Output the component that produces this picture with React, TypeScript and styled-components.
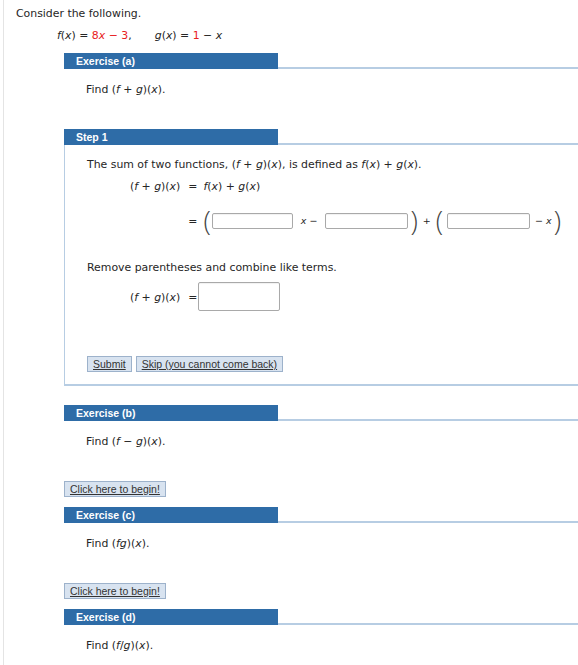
import React from "react";
import styled, { createGlobalStyle } from "styled-components";

const GlobalStyle = createGlobalStyle`
  html, body { margin: 0; padding: 0; background: #ffffff; }
  body {
    font-family: "DejaVu Sans", Verdana, sans-serif;
    font-size: 10.9px;
    color: #262626;
  }
`;

const Page = styled.div`
  margin-left: 3px;
  border-left: 1px solid #e4e4e4;
  min-height: 665px;
  padding: 6px 0 0 12px;
  box-sizing: border-box;
`;

const TextLine = styled.div<{ $indent?: number; $mt?: number }>`
  height: 14px;
  line-height: 16px;
  white-space: nowrap;
  padding-left: ${(p) => p.$indent ?? 0}px;
  margin-top: ${(p) => p.$mt ?? 0}px;
`;

const Var = styled.i`
  font-style: italic;
`;

const Red = styled.span`
  color: #e8201c;
`;

const Spacer = styled.span<{ $w: number }>`
  display: inline-block;
  width: ${(p) => p.$w}px;
`;

const Section = styled.div`
  margin-left: 48px;
`;

const Header = styled.div<{ $mt: number }>`
  display: flex;
  align-items: flex-end;
  margin-top: ${(p) => p.$mt}px;
`;

const HeaderLabel = styled.div`
  width: 214px;
  height: 16px;
  box-sizing: border-box;
  padding-left: 12px;
  background: #2e6ca7;
  color: #ffffff;
  font: bold 10.5px/16px "Liberation Sans", Arial, sans-serif;
  white-space: nowrap;
`;

const HeaderRule = styled.div`
  flex: 1;
  height: 2px;
  background: #b7cde3;
`;

const StepBox = styled.div`
  border-left: 1px solid #b7cde3;
  border-bottom: 2px solid #b7cde3;
  padding: 12px 0 12px 22px;
`;

const EqGrid = styled.div<{ $mt: number }>`
  display: grid;
  grid-template-columns: auto auto auto;
  justify-content: start;
  align-items: center;
  row-gap: 16px;
  margin-left: 43px;
  margin-top: ${(p) => p.$mt}px;
`;

const Cell = styled.div`
  height: 14px;
  line-height: 16px;
  white-space: nowrap;
`;

const Equals = styled.div<{ $after: number }>`
  height: 14px;
  line-height: 16px;
  padding: 0 ${(p) => p.$after}px 0 8px;
`;

const AnswerRow = styled.div`
  display: flex;
  align-items: center;
  height: 24px;
`;

const Paren = styled.span<{ $ml?: number; $mr?: number }>`
  font-family: "Open Sans", "DejaVu Sans", sans-serif;
  font-weight: 300;
  font-size: 27px;
  line-height: 24px;
  color: #444444;
  margin: 0 ${(p) => p.$mr ?? 0}px 0 ${(p) => p.$ml ?? 0}px;
`;

const Op = styled.span<{ $l: number; $r: number }>`
  font-size: 9.5px;
  line-height: 14px;
  white-space: nowrap;
  margin: 0 ${(p) => p.$r}px 0 ${(p) => p.$l}px;
`;

const Field = styled.span<{ $w: number; $h: number }>`
  display: inline-block;
  width: ${(p) => p.$w}px;
  height: ${(p) => p.$h}px;
  box-sizing: border-box;
  border: 1px solid #a9a9a9;
  border-radius: 2px;
  background: #ffffff;
  box-shadow: inset 0 1px 1px rgba(0, 0, 0, 0.06);
`;

const ButtonRow = styled.div`
  display: flex;
  gap: 4px;
  margin-top: 45px;
`;

const Btn = styled.button<{ $mt?: number }>`
  display: block;
  height: 16px;
  margin: ${(p) => p.$mt ?? 0}px 0 0 0;
  padding: 0 5px;
  border: 1px solid #9db2cb;
  background: #d8e3f0;
  color: #333333;
  font: 10.5px/14px "Liberation Sans", Arial, sans-serif;
  text-decoration: underline;
  white-space: nowrap;
  box-sizing: border-box;
  cursor: pointer;
`;

const FG = () => (
  <>
    (<Var>f</Var> + <Var>g</Var>)(<Var>x</Var>)
  </>
);

export default function App() {
  return (
    <>
      <GlobalStyle />
      <Page>
        <TextLine>Consider the following.</TextLine>
        <TextLine $indent={41} $mt={8}>
          <Var>f</Var>(<Var>x</Var>) = <Red>8<Var>x</Var> − 3</Red>,
          <Spacer $w={23} />
          <Var>g</Var>(<Var>x</Var>) = <Red>1</Red> − <Var>x</Var>
        </TextLine>

        <Section>
          <Header $mt={11}>
            <HeaderLabel>Exercise (a)</HeaderLabel>
            <HeaderRule />
          </Header>
          <TextLine $indent={22} $mt={13}>
            Find <FG />.
          </TextLine>

          <Header $mt={33}>
            <HeaderLabel>Step 1</HeaderLabel>
            <HeaderRule />
          </Header>
          <StepBox>
            <TextLine>
              The sum of two functions, <FG />, is defined as <Var>f</Var>(<Var>x</Var>) + <Var>g</Var>(<Var>x</Var>).
            </TextLine>
            <EqGrid $mt={8}>
              <Cell>
                <FG />
              </Cell>
              <Equals $after={6}>=</Equals>
              <Cell>
                <Var>f</Var>(<Var>x</Var>) + <Var>g</Var>(<Var>x</Var>)
              </Cell>
              <Cell />
              <Equals $after={3}>=</Equals>
              <AnswerRow>
                <Paren $mr={1}>(</Paren>
                <Field $w={81} $h={16} />
                <Op $l={8} $r={8}>
                  <Var>x</Var> −
                </Op>
                <Field $w={83} $h={16} />
                <Paren $ml={2}>)</Paren>
                <Op $l={5} $r={5}>+</Op>
                <Paren $mr={4}>(</Paren>
                <Field $w={83} $h={16} />
                <Op $l={5} $r={2}>
                  − <Var>x</Var>
                </Op>
                <Paren>)</Paren>
              </AnswerRow>
            </EqGrid>

            <TextLine $mt={27}>Remove parentheses and combine like terms.</TextLine>
            <EqGrid $mt={8}>
              <Cell>
                <FG />
              </Cell>
              <Equals $after={1}>=</Equals>
              <Field $w={82} $h={29} />
            </EqGrid>

            <ButtonRow>
              <Btn>Submit</Btn>
              <Btn>Skip (you cannot come back)</Btn>
            </ButtonRow>
          </StepBox>

          <Header $mt={19}>
            <HeaderLabel>Exercise (b)</HeaderLabel>
            <HeaderRule />
          </Header>
          <TextLine $indent={22} $mt={13}>
            Find (<Var>f</Var> − <Var>g</Var>)(<Var>x</Var>).
          </TextLine>
          <Btn $mt={33}>Click here to begin!</Btn>

          <Header $mt={10}>
            <HeaderLabel>Exercise (c)</HeaderLabel>
            <HeaderRule />
          </Header>
          <TextLine $indent={22} $mt={13}>
            Find (<Var>fg</Var>)(<Var>x</Var>).
          </TextLine>
          <Btn $mt={33}>Click here to begin!</Btn>

          <Header $mt={10}>
            <HeaderLabel>Exercise (d)</HeaderLabel>
            <HeaderRule />
          </Header>
          <TextLine $indent={22} $mt={13}>
            Find (<Var>f</Var>/<Var>g</Var>)(<Var>x</Var>).
          </TextLine>
        </Section>
      </Page>
    </>
  );
}
